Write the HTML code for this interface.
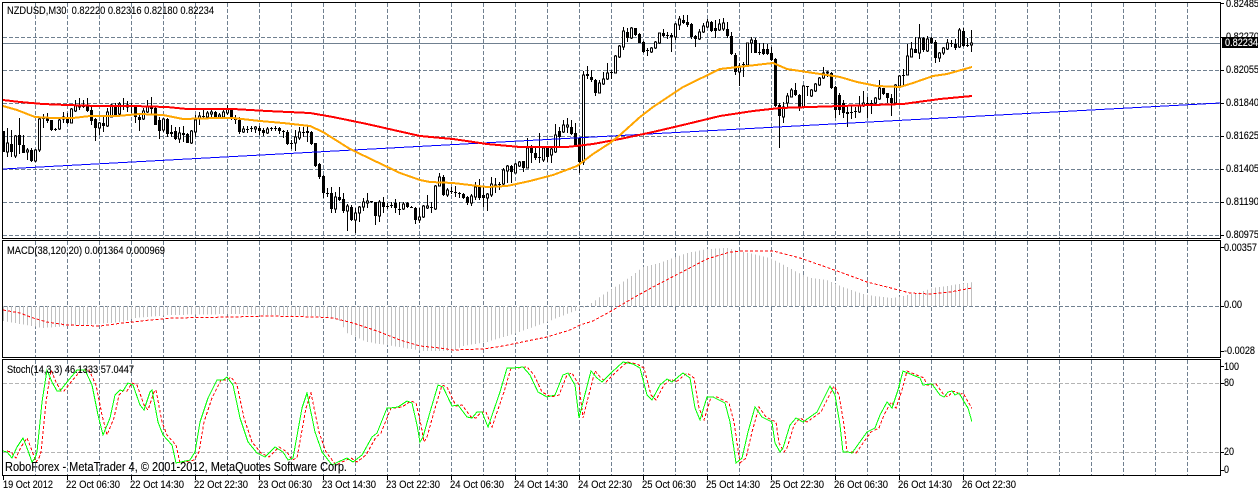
<!DOCTYPE html>
<html><head><meta charset="utf-8"><title>NZDUSD,M30</title>
<style>
html,body{margin:0;padding:0;background:#fff;width:1258px;height:493px;overflow:hidden}
svg{display:block}
text{font-family:"Liberation Sans",sans-serif;font-size:11px;fill:#000;stroke:#000;stroke-width:.12}
</style></head><body>
<svg xmlns="http://www.w3.org/2000/svg" width="1258" height="493" viewBox="0 0 1258 493">
<defs>
<pattern id="hb" x="3" y="0" width="4" height="20" patternUnits="userSpaceOnUse"><rect width="1" height="20" fill="#c0c0c0"/></pattern>
<clipPath id="cs"><rect x="3" y="360" width="969" height="115"/></clipPath>
<path id="st" d="M3 451L7 452 12 458 17 447 23 438 27 448 32 462 35 458 37 452 42 402 47 370 52 382 57 391 60 391 67 382 77 370 85 370 92 385 98 415 103 435 110 418 115 395 120 390 123 391 128 383 133 385 140 405 144 410 150 392 152 390 158 422 163 435 172 445 176 463 190 460 195 452 200 422 208 398 217 380 223 380 227 377 233 385 240 418 248 442 257 453 265 457 275 447 283 452 288 460 293 458 302 408 307 393 315 432 322 452 332 465 338 462 347 458 353 462 362 455 372 437 377 433 387 408 390 408 398 407 407 401 412 403 417 425 420 442 423 437 430 412 438 385 443 387 452 406 458 405 467 417 472 418 477 412 482 412 488 427 500 392 507 368 513 368 523 367 530 375 538 392 547 397 555 395 563 375 568 373 575 385 579 418 583 402 591 371 597 378 602 382 612 372 623 362 633 364 640 368 647 395 652 400 660 385 667 379 672 382 678 377 683 373 690 378 695 408 700 420 707 397 713 397 725 403 730 422 736 463 742 458 748 432 755 407 762 417 772 422 775 443 780 452 783 448 790 425 796 418 803 422 810 417 817 412 830 386 835 395 840 425 843 452 848 452 852 453 867 432 875 428 880 415 887 402 892 408 898 390 903 371 920 378 923 385 932 384 940 395 944 397 948 392 952 391 955 395 959 393 966 405 968 408 972 422" fill="none"/>
</defs>

<!-- grid -->
<g shape-rendering="crispEdges" fill="none" stroke="#708090" stroke-width="1" stroke-dasharray="4 2">
<path d="M3 37.5H1220M3 70.5H1220M3 103.5H1220M3 136.5H1220M3 169.5H1220M3 202.5H1220M3 235.5H1220"/>
<path d="M35.5 3V238M67.5 3V238M99.5 3V238M131.5 3V238M163.5 3V238M195.5 3V238M227.5 3V238M259.5 3V238M291.5 3V238M323.5 3V238M355.5 3V238M387.5 3V238M419.5 3V238M451.5 3V238M483.5 3V238M515.5 3V238M547.5 3V238M579.5 3V238M611.5 3V238M643.5 3V238M675.5 3V238M707.5 3V238M739.5 3V238M771.5 3V238M803.5 3V238M835.5 3V238M867.5 3V238M899.5 3V238M931.5 3V238M963.5 3V238M995.5 3V238M1027.5 3V238M1059.5 3V238M1091.5 3V238M1123.5 3V238M1155.5 3V238M1187.5 3V238"/>
<path d="M35.5 241V357M67.5 241V357M99.5 241V357M131.5 241V357M163.5 241V357M195.5 241V357M227.5 241V357M259.5 241V357M291.5 241V357M323.5 241V357M355.5 241V357M387.5 241V357M419.5 241V357M451.5 241V357M483.5 241V357M515.5 241V357M547.5 241V357M579.5 241V357M611.5 241V357M643.5 241V357M675.5 241V357M707.5 241V357M739.5 241V357M771.5 241V357M803.5 241V357M835.5 241V357M867.5 241V357M899.5 241V357M931.5 241V357M963.5 241V357M995.5 241V357M1027.5 241V357M1059.5 241V357M1091.5 241V357M1123.5 241V357M1155.5 241V357M1187.5 241V357"/>
<path d="M35.5 360V475M67.5 360V475M99.5 360V475M131.5 360V475M163.5 360V475M195.5 360V475M227.5 360V475M259.5 360V475M291.5 360V475M323.5 360V475M355.5 360V475M387.5 360V475M419.5 360V475M451.5 360V475M483.5 360V475M515.5 360V475M547.5 360V475M579.5 360V475M611.5 360V475M643.5 360V475M675.5 360V475M707.5 360V475M739.5 360V475M771.5 360V475M803.5 360V475M835.5 360V475M867.5 360V475M899.5 360V475M931.5 360V475M963.5 360V475M995.5 360V475M1027.5 360V475M1059.5 360V475M1091.5 360V475M1123.5 360V475M1155.5 360V475M1187.5 360V475"/>
<path d="M3 306.5H1220"/>
<path stroke="#b4b4b4" d="M3 383.5H1220M3 452.5H1220"/>
</g>
<path d="M3 43.5H1220" stroke="#708090" shape-rendering="crispEdges"/>

<!-- wicks -->
<path shape-rendering="crispEdges" stroke="#000" fill="none" d="M3.5 131V152M7.5 128V157M11.5 130V157M15.5 135V158M19.5 118V154M23.5 135V153M27.5 148V160M31.5 148V162M35.5 149V162M39.5 118V152M43.5 114V128M47.5 113V123M51.5 120V131M55.5 128V131M59.5 119V130M63.5 112V123M67.5 113V124M71.5 108V123M75.5 100V112M79.5 98V110M83.5 100V108M87.5 98V112M91.5 107V125M95.5 118V141M99.5 122V135M103.5 117V132M107.5 108V127M111.5 104V117M115.5 103V117M119.5 102V115M123.5 98V110M127.5 101V112M131.5 103V113M135.5 107V123M139.5 115V131M143.5 108V120M147.5 100V113M151.5 97V115M155.5 107V125M159.5 117V139M163.5 118V132M167.5 118V137M171.5 125V137M175.5 127V140M179.5 127V143M183.5 126V142M187.5 133V143M191.5 130V144M195.5 115V137M199.5 112V125M203.5 110V119M207.5 111V119M211.5 109V117M215.5 111V118M219.5 113V118M223.5 110V118M227.5 105V115M231.5 108V120M235.5 115V124M239.5 117V134M243.5 126V133M247.5 126V133M251.5 126V132M255.5 126V133M259.5 126V135M263.5 128V136M267.5 127V134M271.5 127V131M275.5 126V131M279.5 127V134M283.5 130V138M287.5 130V145M291.5 140V149M295.5 130V151M299.5 127V140M303.5 127V137M307.5 126V142M311.5 131V145M315.5 143V167M319.5 163V179M323.5 175V198M327.5 188V197M331.5 187V213M335.5 192V213M339.5 187V201M343.5 193V213M347.5 204V231M351.5 205V221M355.5 208V233M359.5 206V222M363.5 198V211M367.5 193V208M371.5 201V203M375.5 202V225M379.5 200V222M383.5 197V213M387.5 203V209M391.5 202V208M395.5 199V213M399.5 202V215M403.5 202V210M407.5 202V208M411.5 206V208M415.5 207V224M419.5 208V223M423.5 205V218M427.5 195V209M431.5 202V213M435.5 185V210M439.5 173V186M443.5 175V196M447.5 188V197M451.5 187V194M455.5 186V197M459.5 192V198M463.5 193V199M467.5 196V205M471.5 194V206M475.5 182V200M479.5 179V200M483.5 187V207M487.5 193V211M491.5 177V197M495.5 178V193M499.5 182V190M503.5 168V185M507.5 165V183M511.5 165V183M515.5 163V173M519.5 161V167M523.5 161V172M527.5 138V168M531.5 145V163M535.5 148V160M539.5 133V163M543.5 147V162M547.5 147V162M551.5 147V163M555.5 124V153M559.5 127V147M563.5 120V133M567.5 118V133M571.5 120V135M575.5 123V147M579.5 137V173M583.5 71V165M587.5 66V79M591.5 70V82M595.5 79V96M599.5 80V93M603.5 72V85M607.5 63V80M611.5 70V79M615.5 55V73M619.5 45V58M623.5 27V50M627.5 28V42M631.5 27V39M635.5 28V36M639.5 33V43M643.5 41V53M647.5 48V56M651.5 47V53M655.5 41V49M659.5 33V44M663.5 29V37M667.5 32V39M671.5 33V52M675.5 23V40M679.5 16V30M683.5 15V24M687.5 15V27M691.5 23V39M695.5 35V47M699.5 29V40M703.5 23V33M707.5 19V28M711.5 21V32M715.5 20V38M719.5 19V31M723.5 18V31M727.5 22V38M731.5 32V55M735.5 53V75M739.5 63V86M743.5 62V77M747.5 43V66M751.5 37V53M755.5 38V53M759.5 43V55M763.5 43V55M767.5 44V55M771.5 47V61M775.5 58V107M779.5 103V148M783.5 102V123M787.5 93V108M791.5 88V97M795.5 83V96M799.5 94V111M803.5 85V107M807.5 86V96M811.5 89V97M815.5 83V92M819.5 77V86M823.5 67V79M827.5 71V77M831.5 72V89M835.5 86V118M839.5 93V115M843.5 100V118M847.5 106V127M851.5 106V119M855.5 107V118M859.5 96V113M863.5 91V107M867.5 97V118M871.5 100V114M875.5 97V105M879.5 80V100M883.5 88V95M887.5 93V103M891.5 94V116M895.5 84V104M899.5 75V87M903.5 69V86M907.5 44V75M911.5 42V57M915.5 37V53M919.5 24V59M923.5 37V52M927.5 36V52M931.5 37V44M935.5 40V63M939.5 52V62M943.5 47V55M947.5 39V50M951.5 40V47M955.5 39V50M959.5 28V48M963.5 28V47M967.5 38V47M971.5 30V52"/>
<!-- black bodies -->
<path shape-rendering="crispEdges" stroke="#000" stroke-width="3" fill="none" d="M3.5 131V152M11.5 144V152M19.5 135V145M23.5 145V153M31.5 150V161M43.5 117V119M47.5 117V121M51.5 120V130M55.5 129V130M67.5 118V123M83.5 105V107M87.5 105V111M91.5 110V121M95.5 119V128M103.5 123V126M115.5 106V115M123.5 106V107M131.5 105V107M135.5 107V117M139.5 117V120M151.5 107V109M155.5 108V125M159.5 120V131M167.5 119V134M171.5 132V134M175.5 131V139M183.5 133V135M187.5 134V143M203.5 116V117M215.5 112V117M231.5 110V119M235.5 118V120M239.5 120V132M247.5 129V130M251.5 128V129M259.5 128V131M263.5 130V133M271.5 128V129M275.5 128V129M279.5 128V131M283.5 131V132M287.5 132V144M291.5 143V144M303.5 132V133M307.5 131V133M311.5 132V144M315.5 143V166M319.5 164V177M323.5 176V193M327.5 193V194M331.5 193V209M339.5 197V200M343.5 199V211M351.5 207V220M371.5 201V202M375.5 202V216M383.5 202V207M387.5 206V207M391.5 205V206M395.5 203V208M399.5 209V210M407.5 203V207M411.5 207V208M415.5 208V220M431.5 207V208M443.5 177V195M451.5 191V192M455.5 192V193M459.5 193V194M463.5 194V198M467.5 197V203M479.5 187V198M483.5 195V198M499.5 184V185M511.5 166V172M523.5 161V168M531.5 148V153M535.5 153V158M539.5 157V158M547.5 148V157M559.5 131V137M571.5 127V134M575.5 133V145M579.5 138V162M587.5 74V76M591.5 77V80M595.5 80V93M611.5 72V73M627.5 32V38M635.5 28V35M639.5 34V43M643.5 42V52M647.5 50V51M663.5 33V36M667.5 35V36M671.5 35V37M683.5 20V23M687.5 22V25M691.5 24V37M695.5 36V39M711.5 22V31M715.5 28V31M727.5 29V36M731.5 36V54M735.5 55V72M743.5 64V65M755.5 40V53M759.5 52V53M763.5 49V54M767.5 49V54M771.5 53V60M775.5 59V106M779.5 105V116M795.5 90V95M799.5 95V107M807.5 86V87M831.5 73V88M835.5 87V110M839.5 95V110M843.5 103V113M847.5 112V114M851.5 112V113M855.5 111V112M867.5 103V104M871.5 103V104M883.5 88V94M887.5 93V98M891.5 98V103M903.5 75V76M915.5 49V53M923.5 38V50M931.5 38V43M935.5 42V58M951.5 43V44M955.5 44V48M963.5 31V46M967.5 45V46"/>
<!-- white bodies -->
<path shape-rendering="crispEdges" stroke="#000" fill="#fff" d="M6.5 143h2v9h-2zM14.5 136h2v20h-2zM26.5 150h2v2h-2zM34.5 150h2v11h-2zM38.5 119h2v31h-2zM58.5 120h2v9h-2zM62.5 117h2v2h-2zM70.5 109h2v14h-2zM74.5 105h2v6h-2zM78.5 105h2v2h-2zM98.5 123h2v5h-2zM106.5 112h2v14h-2zM110.5 105h2v12h-2zM118.5 104h2v10h-2zM126.5 105h2v2h-2zM142.5 111h2v8h-2zM146.5 106h2v6h-2zM162.5 119h2v11h-2zM178.5 133h2v6h-2zM190.5 131h2v12h-2zM194.5 120h2v12h-2zM198.5 116h2v3h-2zM206.5 113h2v4h-2zM210.5 112h2v2h-2zM218.5 115h2v2h-2zM222.5 112h2v5h-2zM226.5 109h2v4h-2zM242.5 129h2v3h-2zM254.5 127h2v2h-2zM266.5 129h2v4h-2zM294.5 137h2v6h-2zM298.5 132h2v6h-2zM334.5 197h2v12h-2zM346.5 206h2v5h-2zM354.5 213h2v7h-2zM358.5 207h2v6h-2zM362.5 202h2v5h-2zM366.5 201h2v2h-2zM378.5 202h2v14h-2zM402.5 204h2v5h-2zM418.5 217h2v3h-2zM422.5 206h2v11h-2zM426.5 206h2v2h-2zM434.5 186h2v23h-2zM438.5 177h2v9h-2zM446.5 190h2v5h-2zM470.5 196h2v7h-2zM474.5 187h2v10h-2zM486.5 194h2v4h-2zM490.5 184h2v11h-2zM494.5 185h2v1h-2zM502.5 170h2v14h-2zM506.5 166h2v5h-2zM514.5 164h2v9h-2zM518.5 162h2v4h-2zM526.5 148h2v20h-2zM542.5 148h2v12h-2zM550.5 149h2v6h-2zM554.5 135h2v17h-2zM562.5 125h2v7h-2zM566.5 125h2v2h-2zM582.5 75h2v87h-2zM598.5 83h2v10h-2zM602.5 79h2v5h-2zM606.5 73h2v6h-2zM614.5 56h2v17h-2zM618.5 46h2v11h-2zM622.5 31h2v16h-2zM630.5 28h2v10h-2zM650.5 48h2v4h-2zM654.5 42h2v6h-2zM658.5 33h2v10h-2zM674.5 24h2v13h-2zM678.5 19h2v6h-2zM698.5 32h2v7h-2zM702.5 26h2v6h-2zM706.5 22h2v5h-2zM718.5 24h2v6h-2zM722.5 23h2v6h-2zM738.5 66h2v6h-2zM746.5 43h2v22h-2zM750.5 40h2v3h-2zM782.5 107h2v10h-2zM786.5 96h2v7h-2zM790.5 90h2v7h-2zM802.5 86h2v21h-2zM810.5 90h2v6h-2zM814.5 84h2v7h-2zM818.5 78h2v7h-2zM822.5 73h2v5h-2zM826.5 72h2v1h-2zM858.5 105h2v7h-2zM862.5 103h2v3h-2zM874.5 98h2v5h-2zM878.5 88h2v11h-2zM894.5 85h2v18h-2zM898.5 76h2v10h-2zM906.5 56h2v19h-2zM910.5 49h2v8h-2zM918.5 38h2v15h-2zM926.5 39h2v12h-2zM938.5 53h2v5h-2zM942.5 48h2v5h-2zM946.5 43h2v6h-2zM958.5 30h2v17h-2zM970.5 43h2v2h-2z"/>

<!-- moving averages -->
<path fill="none" stroke="#0000ff" stroke-width="1" shape-rendering="crispEdges" d="M3 169L1220 103"/>
<path fill="none" stroke="#ff0000" stroke-width="2" shape-rendering="crispEdges" d="M3 100L20 102 43 104 67 105 97 106 133 106 167 107 187 109 233 109 267 111 310 113 333 117 367 124 420 136 453 139 487 144 520 147 567 147 593 144 620 139 653 132 687 124 720 116 753 111 780 108 840 106 873 105 903 104 940 99 972 96"/>
<path fill="none" stroke="#ffa500" stroke-width="2" shape-rendering="crispEdges" d="M3 106L17 110 35 117 53 118 73 118 90 116 117 116 140 114 163 115 183 119 217 118 233 118 260 121 283 123 310 126 323 132 350 149 377 162 400 173 420 180 430 182 453 183 487 187 507 186 530 181 553 175 577 166 593 154 610 143 620 135 640 117 653 107 683 87 720 69 747 66 773 63 787 69 820 74 840 77 857 82 877 86 900 87 913 83 933 76 947 74 972 67"/>

<!-- MACD -->
<polygon fill="url(#hb)" shape-rendering="crispEdges" points="3,306 3,321 43,328 83,325 123,322 135,318 170,315 235,314 267,315 315,316 339,320 347,333 367,342 393,346 417,350 423,351 453,351 463,346 487,342 517,333 547,322 567,314 580,309 587,306 593,302 607,292 620,284 633,275 643,267 660,263 673,258 687,253 707,249 727,248 740,251 753,254 770,258 780,263 797,272 810,278 827,280 843,287 860,293 873,296 893,298 903,296 917,293 933,288 953,285 973,282 973,306"/>
<path fill="none" stroke="#ff0000" stroke-dasharray="3 2" shape-rendering="crispEdges" d="M3 310L20 313 33 318 47 322 67 325 100 326 123 323 150 320 173 318 233 317 267 316 317 317 333 318 353 323 377 331 400 340 420 346 440 348 453 350 483 349 503 346 527 341 547 337 570 330 580 325 593 321 613 310 633 298 653 287 680 273 707 259 730 252 743 251 773 251 800 258 823 266 840 272 867 282 887 287 910 293 930 294 950 292 972 288"/>

<!-- Stochastic -->
<g clip-path="url(#cs)" shape-rendering="crispEdges">
<use href="#st" transform="translate(4 0)" stroke="#ff0000" stroke-dasharray="3 2"/>
<use href="#st" stroke="#00ff00"/>
</g>

<!-- borders and ticks -->
<g shape-rendering="crispEdges" fill="none" stroke="#000">
<rect x="2.5" y="2.5" width="1218" height="236"/>
<rect x="2.5" y="240.5" width="1218" height="117"/>
<rect x="2.5" y="359.5" width="1218" height="116"/>
<path d="M1221 3.5h3M1221 37.5h3M1221 70.5h3M1221 103.5h3M1221 136.5h3M1221 169.5h3M1221 202.5h3M1221 235.5h3M1221 247.5h3M1221 306.5h3M1221 351.5h3M1221 366.5h3M1221 383.5h3M1221 452.5h3M1221 470.5h3"/>
<path d="M3.5 476v4M67.5 476v4M131.5 476v4M195.5 476v4M259.5 476v4M323.5 476v4M387.5 476v4M451.5 476v4M515.5 476v4M579.5 476v4M643.5 476v4M707.5 476v4M771.5 476v4M835.5 476v4M899.5 476v4M963.5 476v4"/>
</g>

<!-- labels -->
<g>
<text x="7" y="14" textLength="207" lengthAdjust="spacingAndGlyphs" xml:space="preserve">NZDUSD,M30  0.82220 0.82316 0.82180 0.82234</text>
<text x="7" y="254" textLength="158" lengthAdjust="spacingAndGlyphs">MACD(38,120,20) 0.001364 0.000969</text>
<text x="7" y="373" textLength="127" lengthAdjust="spacingAndGlyphs">Stoch(14,3,3) 46.1333 57.0447</text>
<text x="5" y="471" textLength="342" lengthAdjust="spacingAndGlyphs" style="font-size:13px">RoboForex - MetaTrader 4, © 2001-2012, MetaQuotes Software Corp.</text>
</g>

<g>
<text x="1226" y="7" textLength="33" lengthAdjust="spacingAndGlyphs">0.82485</text>
<text x="1226" y="40" textLength="33" lengthAdjust="spacingAndGlyphs">0.82270</text>
<text x="1226" y="73" textLength="33" lengthAdjust="spacingAndGlyphs">0.82055</text>
<text x="1226" y="106" textLength="33" lengthAdjust="spacingAndGlyphs">0.81840</text>
<text x="1226" y="139" textLength="33" lengthAdjust="spacingAndGlyphs">0.81625</text>
<text x="1226" y="172" textLength="33" lengthAdjust="spacingAndGlyphs">0.81405</text>
<text x="1226" y="205" textLength="33" lengthAdjust="spacingAndGlyphs">0.81190</text>
<text x="1226" y="238" textLength="33" lengthAdjust="spacingAndGlyphs">0.80975</text>
</g>
<rect x="1222" y="37" width="36" height="11" fill="#000" shape-rendering="crispEdges"/>
<text x="1225" y="46" textLength="33" lengthAdjust="spacingAndGlyphs" style="fill:#fff;stroke:#fff">0.82234</text>

<text x="1224" y="251" textLength="33" lengthAdjust="spacingAndGlyphs">0.00357</text>
<text x="1224" y="308" textLength="18" lengthAdjust="spacingAndGlyphs">0.00</text>
<text x="1224" y="354" textLength="31" lengthAdjust="spacingAndGlyphs">-0.0028</text>
<text x="1224" y="370" textLength="15" lengthAdjust="spacingAndGlyphs">100</text>
<text x="1224" y="386" textLength="10" lengthAdjust="spacingAndGlyphs">80</text>
<text x="1224" y="455" textLength="10" lengthAdjust="spacingAndGlyphs">20</text>
<text x="1224" y="473" textLength="5" lengthAdjust="spacingAndGlyphs">0</text>

<g>
<text x="3" y="488" textLength="50" lengthAdjust="spacingAndGlyphs">19 Oct 2012</text>
<text x="66" y="488" textLength="54" lengthAdjust="spacingAndGlyphs">22 Oct 06:30</text>
<text x="130" y="488" textLength="54" lengthAdjust="spacingAndGlyphs">22 Oct 14:30</text>
<text x="194" y="488" textLength="54" lengthAdjust="spacingAndGlyphs">22 Oct 22:30</text>
<text x="258" y="488" textLength="54" lengthAdjust="spacingAndGlyphs">23 Oct 06:30</text>
<text x="322" y="488" textLength="54" lengthAdjust="spacingAndGlyphs">23 Oct 14:30</text>
<text x="386" y="488" textLength="54" lengthAdjust="spacingAndGlyphs">23 Oct 22:30</text>
<text x="450" y="488" textLength="54" lengthAdjust="spacingAndGlyphs">24 Oct 06:30</text>
<text x="514" y="488" textLength="54" lengthAdjust="spacingAndGlyphs">24 Oct 14:30</text>
<text x="578" y="488" textLength="54" lengthAdjust="spacingAndGlyphs">24 Oct 22:30</text>
<text x="642" y="488" textLength="54" lengthAdjust="spacingAndGlyphs">25 Oct 06:30</text>
<text x="706" y="488" textLength="54" lengthAdjust="spacingAndGlyphs">25 Oct 14:30</text>
<text x="770" y="488" textLength="54" lengthAdjust="spacingAndGlyphs">25 Oct 22:30</text>
<text x="834" y="488" textLength="54" lengthAdjust="spacingAndGlyphs">26 Oct 06:30</text>
<text x="898" y="488" textLength="54" lengthAdjust="spacingAndGlyphs">26 Oct 14:30</text>
<text x="962" y="488" textLength="54" lengthAdjust="spacingAndGlyphs">26 Oct 22:30</text>
</g>
</svg>
</body></html>
